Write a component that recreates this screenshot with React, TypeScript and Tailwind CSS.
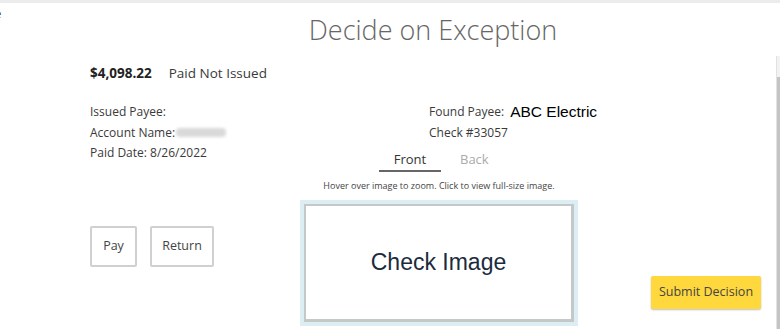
import React from "react";

export default function App() {
  const font = { fontFamily: '"Open Sans", "Noto Sans", sans-serif' };
  return (
    <div
      className="relative w-[780px] h-[329px] overflow-hidden bg-white border-t-[3px] border-[#ececec] text-[#333]"
      style={font}
    >
      {/* cut-off glyph at far left */}
      <span className="absolute left-[-6px] top-[1px] text-[13px] text-[#333]">e</span>

      {/* scrollbar */}
      <div className="absolute right-0 top-[53px] bottom-0 w-[4px] bg-[#f2f2f2] border-l border-[#e2e2e2]">
        <div className="mt-[21px] h-[300px] w-[3px] ml-auto bg-[#c4c4c4]" />
      </div>

      <div className="flex justify-center pl-[90px] pr-[4px] pt-[9px]">
        <h1 className="text-[27px] leading-[36px] font-light text-[#666]">Decide on Exception</h1>
      </div>

      <div className="pl-[90px] mt-[15px] flex items-center text-[13.5px] leading-[20px]">
        <span className="font-bold text-[#222]">$4,098.22</span>
        <span className="ml-[17px] text-[#3a3a3a]">Paid Not Issued</span>
      </div>

      <div className="flex mt-[19px]">
        {/* left column */}
        <div className="w-[300px] pl-[90px] text-[12px] leading-[20.5px] text-[#3a3a3a]">
          <div>Issued Payee:</div>
          <div className="flex items-center">
            Account Name:
            <span className="ml-[1px] inline-block w-[50px] h-[9px] rounded bg-[#d9d9d9] blur-[1.5px]" />
          </div>
          <div>Paid Date: 8/26/2022</div>
          <div className="flex gap-[13px] mt-[62px]">
            <button className="w-[47px] h-[41px] border-2 border-[#d0d0d0] rounded-[2px] text-[12.5px] text-[#444] bg-white">
              Pay
            </button>
            <button className="w-[64px] h-[41px] border-2 border-[#d0d0d0] rounded-[2px] text-[12.5px] text-[#444] bg-white">
              Return
            </button>
          </div>
        </div>

        {/* middle column */}
        <div className="w-[278px] flex flex-col">
          <div className="pl-[129px] text-[12px] leading-[20.5px] text-[#3a3a3a] whitespace-nowrap">
            <div className="flex items-center">
              Found Payee:
              <span
                className="ml-[6px] text-[15.5px] leading-[20px] text-black"
                style={{ fontFamily: '"Liberation Sans", Arial, sans-serif' }}
              >
                ABC Electric
              </span>
            </div>
            <div>Check #33057</div>
          </div>
          <div className="ml-[79px] mt-[6px] flex text-[13px]">
            <div className="w-[62px] text-center border-b-2 border-[#666] leading-[20px] pb-[1px] font-medium text-[#333]">
              Front
            </div>
            <div className="ml-[19px] leading-[20px] text-[#aaa]">Back</div>
          </div>
          <div className="text-center text-[9px] leading-[14px] mt-[7px] text-[#444] whitespace-nowrap">
            Hover over image to zoom. Click to view full-size image.
          </div>
          <div className="mt-[7px] h-[126px] bg-[#dcedf3] p-[4px]">
            <div className="h-full bg-white border-t-2 border-l-2 border-r-[3px] border-b-[3px] border-[#c3c9c9] flex items-center justify-center">
              <span
                className="text-[23px] text-[#1b2b3e]"
                style={{ fontFamily: '"Liberation Sans", Arial, sans-serif' }}
              >
                Check Image
              </span>
            </div>
          </div>
        </div>

        {/* right column */}
        <div className="flex-1 flex flex-col pl-[73px]">
          <button className="mt-[174px] w-[110px] h-[33px] bg-[#fed83d] rounded-[2px] shadow-[0_1px_2px_rgba(0,0,0,0.25)] text-[12.5px] text-[#444]">
            Submit Decision
          </button>
        </div>
      </div>
    </div>
  );
}
